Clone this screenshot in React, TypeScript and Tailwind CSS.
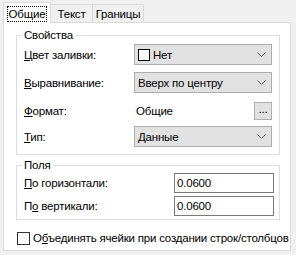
import React from "react";

const Chevron = () => (
  <svg width="9" height="6" viewBox="0 0 9 6" className="shrink-0">
    <polyline points="0.5,0.5 4.5,4.5 8.5,0.5" fill="none" stroke="#606060" strokeWidth="1" />
  </svg>
);

const Combo: React.FC<{ children: React.ReactNode }> = ({ children }) => (
  <div className="flex h-[21px] w-[138px] items-center justify-between border border-[#adadad] bg-[#e1e1e1] pl-[3px] pr-[5px]">
    <div className="flex items-center gap-[3px]">{children}</div>
    <Chevron />
  </div>
);

const Row: React.FC<{ label: React.ReactNode; className?: string; children: React.ReactNode }> = ({
  label,
  className = "",
  children,
}) => (
  <div className={`flex h-[21px] items-center ${className}`}>
    <div className="w-[117px] pl-[7px]">{label}</div>
    {children}
  </div>
);

const Field: React.FC<{ label: React.ReactNode; value: string; className?: string }> = ({
  label,
  value,
  className = "",
}) => (
  <div className={`flex h-[20px] items-center ${className}`}>
    <div className="w-[157px] pl-[7px]">{label}</div>
    <div className="flex h-[20px] w-[100px] items-center border border-[#7a7a7a] bg-white pl-[2px]">{value}</div>
  </div>
);

export default function App() {
  return (
    <div
      className="h-[255px] w-[296px] bg-[#f0f0f0] pl-[3px] pt-[2px] text-[11.5px] leading-[14px] tracking-[-0.2px] text-black"
      style={{ fontFamily: '"Liberation Sans", Arial, sans-serif' }}
    >
      <div className="flex h-[20px] items-end">
        <div className="relative z-10 -mb-px flex h-[21px] w-[48px] items-start justify-center border border-b-0 border-[#d9d9d9] bg-white pt-[3px]">
          <span className="border border-dotted border-black px-[1px]">Общие</span>
        </div>
        <div className="flex h-[18px] w-[42px] items-center justify-center border-t border-r border-[#d9d9d9]">Текст</div>
        <div className="flex h-[18px] w-[51px] items-center justify-center border-t border-r border-[#d9d9d9]">Границы</div>
      </div>

      <div className="h-[229px] w-[288px] border border-[#d9d9d9] bg-white pl-[12px] pr-[10px]">
        <fieldset className="mt-[5px] border border-[#dcdcdc] pb-[7px]">
          <legend className="ml-[5px] px-[2px]">Свойства</legend>
          <Row className="mt-[2px]" label={<><u>Ц</u>вет заливки:</>}>
            <Combo>
              <span className="h-[12px] w-[12px] border border-black bg-white" />
              <span>Нет</span>
            </Combo>
          </Row>
          <Row className="mt-[7px]" label={<><u>В</u>ыравнивание:</>}>
            <Combo>
              <span>Вверх по центру</span>
            </Combo>
          </Row>
          <Row className="mt-[7px]" label={<><u>Ф</u>ормат:</>}>
            <div className="flex w-[138px] items-center justify-between pl-[2px]">
              <span>Общие</span>
              <div className="flex h-[18px] w-[18px] items-center justify-center border border-[#adadad] bg-[#e1e1e1] pb-[4px]">
                ...
              </div>
            </div>
          </Row>
          <Row className="mt-[5px]" label={<><u>Т</u>ип:</>}>
            <Combo>
              <span>Данные</span>
            </Combo>
          </Row>
        </fieldset>

        <fieldset className="mt-[3px] border border-[#dcdcdc] pb-[3px]">
          <legend className="ml-[5px] px-[2px]">Поля</legend>
          <Field className="mt-[1px]" label={<><u>П</u>о горизонтали:</>} value="0.0600" />
          <Field className="mt-[3px]" label={<>П<u>о</u> вертикали:</>} value="0.0600" />
        </fieldset>

        <div className="mt-[11px] flex items-center gap-[3px] pl-[1px]">
          <span className="h-[13px] w-[13px] shrink-0 border border-[#333333] bg-white" />
          <span className="whitespace-nowrap">
            О<u>б</u>ъединять ячейки при создании строк/столбцов
          </span>
        </div>
      </div>
    </div>
  );
}
